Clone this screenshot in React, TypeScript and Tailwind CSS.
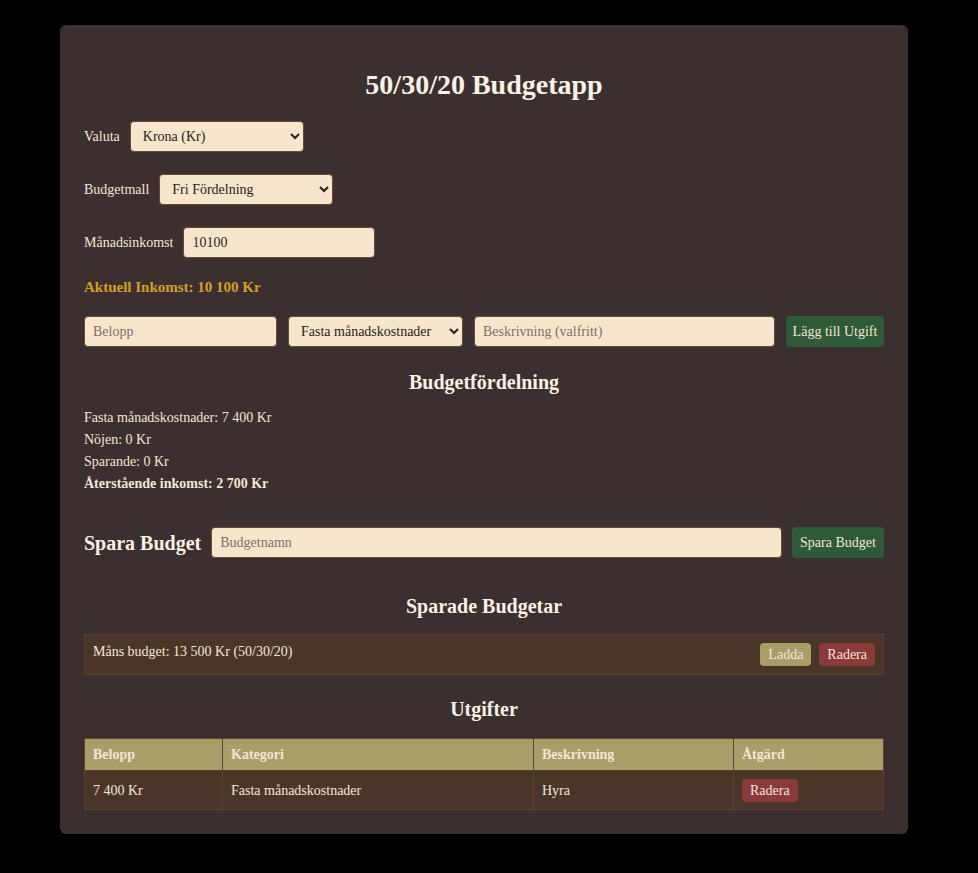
import { useState } from "react";

interface Expense {
    amount: number;
    category: string;
    description: string;
}

const serif = "font-['Liberation_Serif',Georgia,serif]";

function fmt(n: number) {
    return n.toLocaleString("sv-SE").replace(/\u00a0/g, " ") + " Kr";
}

export default function App() {
    const [income, setIncome] = useState("10100");
    const [expenses] = useState<Expense[]>([
        { amount: 7400, category: "Fasta månadskostnader", description: "Hyra" },
    ]);

    const inputCls =
        "h-[31px] rounded-[4px] border border-[#6b4a35] bg-[#f7e6cc] px-2 text-[14px] text-[#2b2020] placeholder:text-[#7c7068] outline-none";

    return (
        <div className={`min-h-screen bg-black pt-[25px] ${serif}`}>
            <div className="ml-[60px] w-[848px] rounded-md bg-[#3c2f2f] px-6 pt-[42px] pb-6 text-[#f5e6d3]">
                {/* Header */}
                <h1 className="text-center text-[28px] font-bold leading-[36px] text-[#fbf1e4]">50/30/20 Budgetapp</h1>

                {/* Settings */}
                <div className="mt-[18px] flex items-center gap-[10px] text-[14px]">
                    <label>Valuta</label>
                    <select className={`${inputCls} w-[174px]`} defaultValue="kr">
                        <option value="kr">Krona (Kr)</option>
                    </select>
                </div>
                <div className="mt-[22px] flex items-center gap-[10px] text-[14px]">
                    <label>Budgetmall</label>
                    <select className={`${inputCls} w-[174px]`} defaultValue="fri">
                        <option value="fri">Fri Fördelning</option>
                    </select>
                </div>
                <div className="mt-[22px] flex items-center gap-[10px] text-[14px]">
                    <label>Månadsinkomst</label>
                    <input
                        className={`${inputCls} w-[192px]`}
                        value={income}
                        onChange={(e) => setIncome(e.target.value)}
                    />
                </div>

                <p className="mt-[18px] text-[15px] font-bold leading-[22px] text-[#d4a020]">
                    Aktuell Inkomst: 10 100 Kr
                </p>

                {/* Add expense */}
                <div className="mt-[18px] flex items-center gap-[11px]">
                    <input className={`${inputCls} w-[193px]`} placeholder="Belopp" />
                    <select className={`${inputCls} w-[175px]`} defaultValue="fasta">
                        <option value="fasta">Fasta månadskostnader</option>
                    </select>
                    <input className={`${inputCls} flex-1`} placeholder="Beskrivning (valfritt)" />
                    <button className="h-[31px] w-[98px] rounded-[4px] bg-[#2f5a37] text-[14px] text-[#f5e6d3]">
                        Lägg till Utgift
                    </button>
                </div>

                {/* Distribution */}
                <h2 className="mt-[21px] text-center text-[20px] font-bold leading-[28px] text-[#fbf1e4]">Budgetfördelning</h2>
                <div className="mt-[11px] text-[14px] leading-[22px]">
                    <p>Fasta månadskostnader: 7 400 Kr</p>
                    <p>Nöjen: 0 Kr</p>
                    <p>Sparande: 0 Kr</p>
                    <p className="font-bold">Återstående inkomst: 2 700 Kr</p>
                </div>

                {/* Save budget */}
                <div className="mt-[32px] flex items-center gap-[10px]">
                    <h2 className="text-[20px] font-bold text-[#fbf1e4]">Spara Budget</h2>
                    <input className={`${inputCls} flex-1`} placeholder="Budgetnamn" />
                    <button className="h-[31px] w-[92px] rounded-[4px] bg-[#2f5a37] text-[14px] text-[#f5e6d3]">
                        Spara Budget
                    </button>
                </div>

                {/* Saved budgets */}
                <h2 className="mt-[34px] text-center text-[20px] font-bold leading-[28px] text-[#fbf1e4]">Sparade Budgetar</h2>
                <div className="mt-[14px] flex h-[41px] items-start justify-between border border-[#5c4030] bg-[#4a3628] pl-2 pr-2 pt-[7px] text-[14px]">
                    <span className="leading-[20px]">Måns budget: 13 500 Kr (50/30/20)</span>
                    <div className="mt-[1px] flex gap-2">
                        <button className="h-[23px] rounded-[4px] bg-[#a89f68] px-2 text-[14px] text-[#f5e6d3]">Ladda</button>
                        <button className="h-[23px] rounded-[4px] bg-[#8b3a3a] px-2 text-[14px] text-[#f5e6d3]">Radera</button>
                    </div>
                </div>

                {/* Expenses */}
                <h2 className="mt-[20px] text-center text-[20px] font-bold leading-[28px] text-[#fbf1e4]">Utgifter</h2>
                <table className="mt-[15px] w-full border-collapse text-left text-[14px]">
                    <thead>
                        <tr className="h-[32px] bg-[#a89f68]">
                            <th className="w-[138px] border border-[#5c4030] px-2 font-bold">Belopp</th>
                            <th className="w-[311px] border border-[#5c4030] px-2 font-bold">Kategori</th>
                            <th className="w-[200px] border border-[#5c4030] px-2 font-bold">Beskrivning</th>
                            <th className="border border-[#5c4030] px-2 font-bold">Åtgärd</th>
                        </tr>
                    </thead>
                    <tbody>
                        {expenses.map((exp, i) => (
                            <tr key={i} className="h-[39px] bg-[#4a3628]">
                                <td className="border border-[#5c4030] px-2">{fmt(exp.amount)}</td>
                                <td className="border border-[#5c4030] px-2">{exp.category}</td>
                                <td className="border border-[#5c4030] px-2">{exp.description}</td>
                                <td className="border border-[#5c4030] px-2">
                                    <button className="h-[23px] rounded-[4px] bg-[#8b3a3a] px-2 text-[14px] text-[#f5e6d3]">
                                        Radera
                                    </button>
                                </td>
                            </tr>
                        ))}
                    </tbody>
                </table>
            </div>
        </div>
    );
}
